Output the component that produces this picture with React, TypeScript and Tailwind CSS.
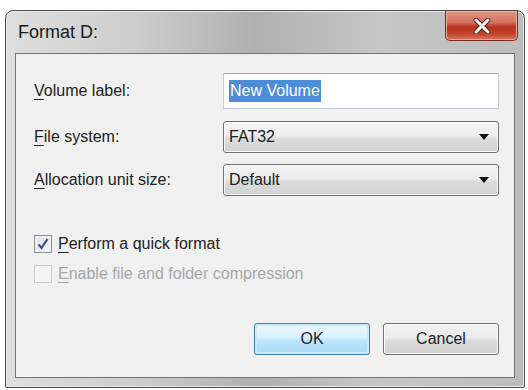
import React from "react";

const font = { fontFamily: '"Liberation Sans", Arial, sans-serif' };

function Mnemonic({ first, rest }: { first: string; rest: string }) {
  return (
    <span>
      <span className="underline underline-offset-[3px] decoration-1">{first}</span>
      {rest}
    </span>
  );
}

function Combo({ value }: { value: string }) {
  return (
    <div className="flex h-[32px] w-[276px] items-center justify-between rounded-[3px] border border-[#707070] bg-[linear-gradient(180deg,#f4f4f4_0%,#ececec_45%,#dcdcdc_55%,#d2d2d2_100%)] pl-[5px] pr-[9px] shadow-[inset_0_0_0_1px_#fafafa]">
      <span className="text-[16px] text-[#1c1c1c]">{value}</span>
      <svg width="10" height="6" viewBox="0 0 10 6">
        <path d="M0 0 L10 0 L5 6 Z" fill="#111" />
      </svg>
    </div>
  );
}

function Checkbox({ checked, disabled }: { checked?: boolean; disabled?: boolean }) {
  return (
    <div
      className={
        disabled
          ? "flex h-[18px] w-[18px] items-center justify-center border border-[#c9c9c9] bg-[#f4f4f4]"
          : "flex h-[18px] w-[18px] items-center justify-center border border-[#8e8f8f] bg-[linear-gradient(135deg,#dcdfe8_0%,#f4f5f8_100%)] shadow-[inset_0_0_0_2px_#eef0f5]"
      }
    >
      {checked && (
        <svg width="14" height="14" viewBox="0 0 14 14">
          <path d="M2.5 7.5 L5.5 11 L11.5 2" fill="none" stroke="#3d4f8a" strokeWidth="2.2" />
        </svg>
      )}
    </div>
  );
}

export default function App() {
  return (
    <div className="h-[390px] w-[528px] overflow-hidden bg-white pl-[5px] pr-[3px] pt-[10px]" style={font}>
      <div className="flex h-[378px] w-[520px] flex-col rounded-t-[8px] rounded-b-[2px] border border-[#4e4e4e] bg-[linear-gradient(90deg,#dedede_0%,#cdcdcd_25%,#b0b0b0_48%,#c6c6c6_72%,#bcbcbc_100%)] shadow-[inset_0_0_0_1px_#e8e8e8]">
        {/* title bar */}
        <div className="flex h-[42px] items-start justify-between pl-[12px] pr-[6px]">
          <div className="pt-[11px] text-[18px] leading-[20px] text-[#1a1a1a]">Format D:</div>
          <div className="flex h-[30px] w-[73px] items-center justify-center rounded-b-[5px] border border-t-0 border-[#7b2a1e] bg-[linear-gradient(180deg,#e49888_0%,#d36e5e_40%,#b9341e_55%,#c4452d_80%,#d47c68_100%)] shadow-[inset_0_0_0_1px_#eca898]">
            <svg width="18" height="16" viewBox="0 0 18 16">
              <path d="M3 2 L15 14 M15 2 L3 14" stroke="#5a2018" strokeWidth="5" strokeLinecap="round" />
              <path d="M3 2 L15 14 M15 2 L3 14" stroke="#ffffff" strokeWidth="3" strokeLinecap="round" />
            </svg>
          </div>
        </div>

        {/* client area */}
        <div className="mx-[9px] mb-[9px] flex flex-1 flex-col border border-[#737373] bg-[#f0f0f0] pl-[18px] pr-[15px] text-[16px] text-[#222]">
          <div className="mt-[19px] flex items-center justify-between">
            <Mnemonic first="V" rest="olume label:" />
            <div className="flex h-[36px] w-[276px] items-center border border-[#c3cad6] border-t-[#a3a9b3] bg-white pl-[5px]">
              <span className="bg-[#4c8dd8] px-[1px] leading-[22px] text-white">New Volume</span>
            </div>
          </div>

          <div className="mt-[12px] flex items-center justify-between">
            <Mnemonic first="F" rest="ile system:" />
            <Combo value="FAT32" />
          </div>

          <div className="mt-[11px] flex items-center justify-between">
            <Mnemonic first="A" rest="llocation unit size:" />
            <Combo value="Default" />
          </div>

          <div className="mt-[36px] flex items-center gap-[6px]">
            <Checkbox checked />
            <Mnemonic first="P" rest="erform a quick format" />
          </div>

          <div className="mt-[6px] flex items-center gap-[6px] text-[#a6a6a6]">
            <Checkbox disabled />
            <Mnemonic first="E" rest="nable file and folder compression" />
          </div>

          <div className="mt-[37px] flex justify-end gap-[13px]">
            <button className="h-[32px] w-[116px] rounded-[3px] border border-[#3c7fb1] bg-[linear-gradient(180deg,#eaf6fd_0%,#d9f0fc_45%,#bee6fd_55%,#a7d9f5_100%)] text-[16px] text-[#222] shadow-[inset_0_0_0_2px_#c6eafc]">
              OK
            </button>
            <button className="h-[32px] w-[116px] rounded-[3px] border border-[#707070] bg-[linear-gradient(180deg,#f2f2f2_0%,#ebebeb_45%,#dddddd_55%,#cfcfcf_100%)] text-[16px] text-[#222] shadow-[inset_0_0_0_1px_#fbfbfb]">
              Cancel
            </button>
          </div>
        </div>
      </div>
    </div>
  );
}
